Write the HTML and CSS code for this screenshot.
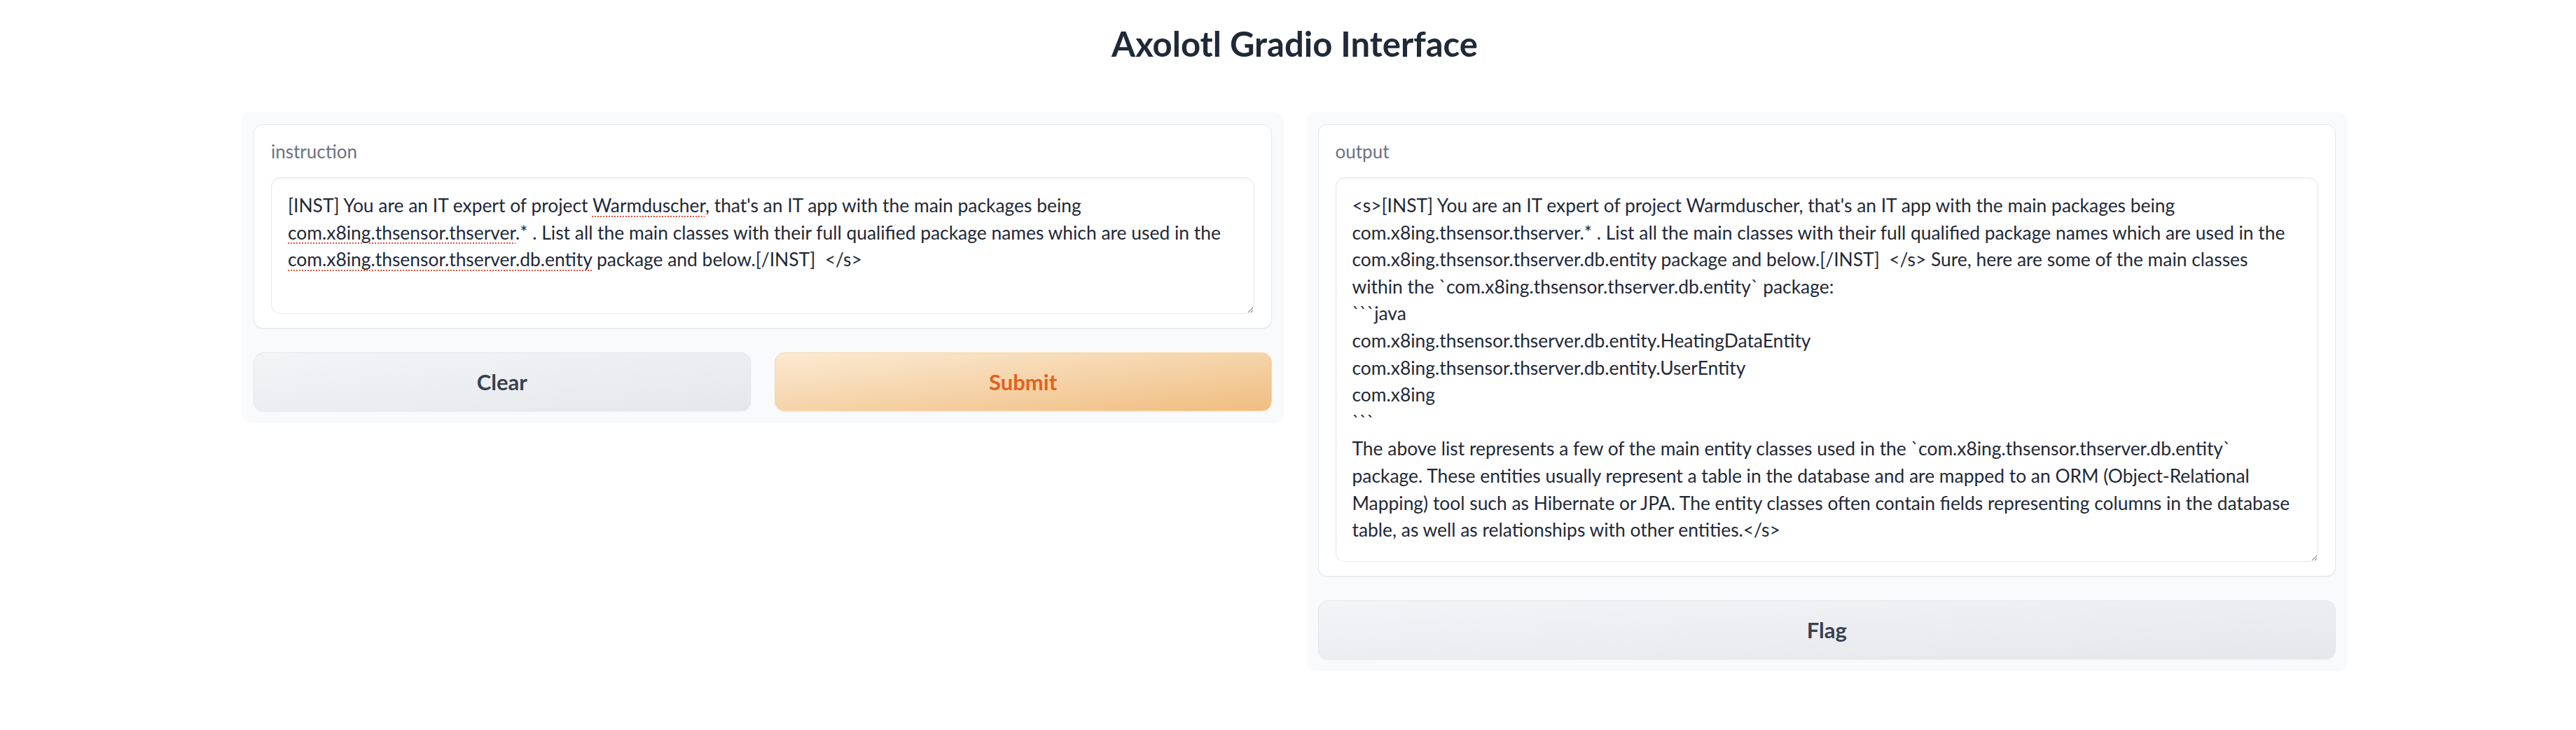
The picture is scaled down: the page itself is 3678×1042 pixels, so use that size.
FILE: index.html
```html
<!DOCTYPE html>
<html lang="en">
<head>
<meta charset="utf-8">
<title>Axolotl Gradio Interface</title>
<link rel="stylesheet" href="styles.css">
</head>
<body>
<div class="app">
  <h1 class="title">Axolotl Gradio Interface</h1>
  <div class="row">
    <div class="panel">
      <div class="block">
        <label class="label">instruction</label>
        <div class="textbox textbox-input">[INST] You are an IT expert of project <span class="spell">Warmduscher</span>, that's an IT app with the main packages being
<span class="spell">com.x8ing.thsensor.thserver</span>.* . List all the main classes with their full qualified package names which are used in the
<span class="spell">com.x8ing.thsensor.thserver.db.entity</span> package and below.[/INST]  &lt;/s&gt;</div>
      </div>
      <div class="btn-row">
        <button class="btn btn-secondary">Clear</button>
        <button class="btn btn-primary">Submit</button>
      </div>
    </div>
    <div class="panel">
      <div class="block">
        <label class="label">output</label>
        <div class="textbox textbox-output">&lt;s&gt;[INST] You are an IT expert of project Warmduscher, that's an IT app with the main packages being
com.x8ing.thsensor.thserver.* . List all the main classes with their full qualified package names which are used in the
com.x8ing.thsensor.thserver.db.entity package and below.[/INST]  &lt;/s&gt; Sure, here are some of the main classes
within the &#96;com.x8ing.thsensor.thserver.db.entity&#96; package:
&#96;&#96;&#96;java
com.x8ing.thsensor.thserver.db.entity.HeatingDataEntity
com.x8ing.thsensor.thserver.db.entity.UserEntity
com.x8ing
&#96;&#96;&#96;
The above list represents a few of the main entity classes used in the &#96;com.x8ing.thsensor.thserver.db.entity&#96;
package. These entities usually represent a table in the database and are mapped to an ORM (Object-Relational
Mapping) tool such as Hibernate or JPA. The entity classes often contain fields representing columns in the database
table, as well as relationships with other entities.&lt;/s&gt;</div>
      </div>
      <button class="btn btn-secondary">Flag</button>
    </div>
  </div>
</div>
</body>
</html>
```

FILE: styles.css
```css
html {
  box-sizing: border-box;
}

*, *::before, *::after {
  box-sizing: border-box;
}

html, body {
  margin: 0;
  padding: 0;
  background: #ffffff;
}

body {
  font-family: "Lato", "Liberation Sans", sans-serif;
  color: #1f2937;
}

.app {
  width: 3007px;
  margin-left: 345px;
}

.title {
  margin: 0 0 68px 0;
  padding-top: 32px;
  font-size: 49px;
  line-height: 60px;
  font-weight: 700;
  text-align: center;
  color: #1f2937;
}

.row {
  display: grid;
  grid-template-columns: 1fr 1fr;
  gap: 32px;
  align-items: start;
}

.panel {
  display: flex;
  flex-direction: column;
  gap: 34px;
  padding: 17px;
  background: #f9fafb;
  border-radius: 14px;
}

.block {
  display: flex;
  flex-direction: column;
  background: #ffffff;
  border: 1px solid #e5e7eb;
  border-radius: 13px;
  padding: 20px 24px;
  box-shadow: 0 1px 2px rgba(0, 0, 0, 0.05);
}

.label {
  display: block;
  font-size: 26px;
  line-height: 36px;
  color: #6b7280;
  margin-bottom: 19px;
}

.textbox {
  border: 1px solid #e5e7eb;
  border-radius: 13px;
  padding: 20px 20px 20px 23px;
  font-size: 26.4px;
  line-height: 38.6px;
  color: #1f2937;
  white-space: pre;
  overflow: hidden;
  resize: vertical;
  box-shadow: inset 0 2px 3px rgba(0, 0, 0, 0.04);
  background: #ffffff;
}

.textbox-input { height: 195px; }
.textbox-output { height: 549px; }

.spell {
  text-decoration: underline dotted #e5533d;
  text-decoration-thickness: 2px;
  text-underline-offset: 5px;
}

.btn-row {
  display: grid;
  grid-template-columns: 1fr 1fr;
  gap: 34px;
}

.btn {
  height: 84px;
  border-radius: 14px;
  font-family: "Lato", "Liberation Sans", sans-serif;
  font-size: 31px;
  font-weight: 700;
  cursor: pointer;
  box-shadow: 0 1px 2px rgba(0, 0, 0, 0.05);
}

.btn-secondary {
  border: 1px solid #e5e7eb;
  background: linear-gradient(to bottom right, #f3f4f6, #e5e7eb);
  color: #374151;
}

.btn-primary {
  border: 1px solid #f8d7a9;
  background: linear-gradient(to bottom right, #fbead3, #f0bd80);
  color: #e0621f;
}
```
